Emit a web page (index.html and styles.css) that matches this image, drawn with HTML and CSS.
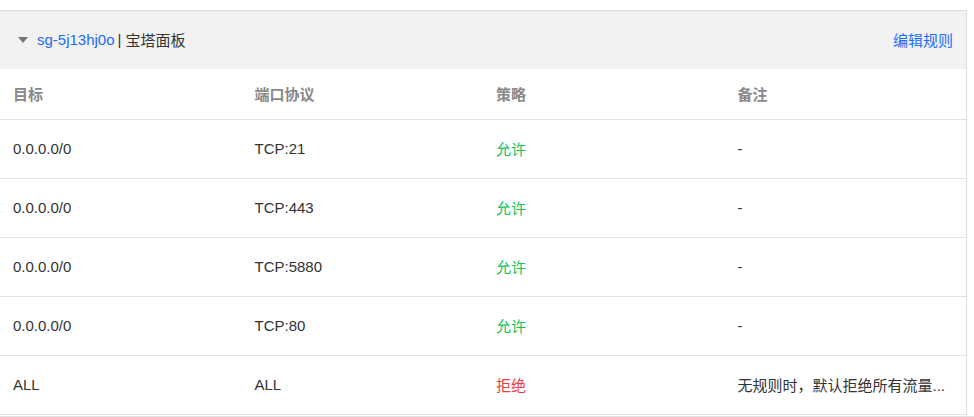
FILE: index.html
```html
<!DOCTYPE html>
<html lang="zh-CN">
<head>
<meta charset="utf-8">
<title>安全组规则</title>
<link rel="stylesheet" href="styles.css">
</head>
<body>
<div class="panel">
  <div class="panel-head">
    <div class="title">
      <span class="caret"></span>
      <span class="sg-id">sg-5j13hj0o</span><span class="sep">|</span><span class="sg-name">宝塔面板</span>
    </div>
    <a class="edit">编辑规则</a>
  </div>
  <div class="row thead">
    <div class="cell">目标</div>
    <div class="cell">端口协议</div>
    <div class="cell">策略</div>
    <div class="cell">备注</div>
  </div>
  <div class="row">
    <div class="cell">0.0.0.0/0</div>
    <div class="cell">TCP:21</div>
    <div class="cell allow">允许</div>
    <div class="cell">-</div>
  </div>
  <div class="row">
    <div class="cell">0.0.0.0/0</div>
    <div class="cell">TCP:443</div>
    <div class="cell allow">允许</div>
    <div class="cell">-</div>
  </div>
  <div class="row">
    <div class="cell">0.0.0.0/0</div>
    <div class="cell">TCP:5880</div>
    <div class="cell allow">允许</div>
    <div class="cell">-</div>
  </div>
  <div class="row">
    <div class="cell">0.0.0.0/0</div>
    <div class="cell">TCP:80</div>
    <div class="cell allow">允许</div>
    <div class="cell">-</div>
  </div>
  <div class="row">
    <div class="cell">ALL</div>
    <div class="cell">ALL</div>
    <div class="cell deny">拒绝</div>
    <div class="cell">无规则时，默认拒绝所有流量...</div>
  </div>
</div>
<div class="next"></div>
</body>
</html>
```
FILE: styles.css
```css
html, body {
  margin: 0;
  padding: 0;
  background: #fff;
}
body {
  font-family: "Liberation Sans", Arial, "Noto Sans CJK SC", sans-serif;
  font-size: 15px;
  color: #333;
}
.panel {
  margin-top: 10px;
  margin-left: -1px;
  width: 966px;
  border: 1px solid #ddd;
  border-bottom: none;
}
.panel-head {
  height: 57px;
  background: #f2f2f2;
  display: flex;
  align-items: center;
  justify-content: space-between;
  padding: 0 13px 0 18px;
  border-bottom: 1px solid #f2f2f2;
}
.title {
  display: flex;
  align-items: center;
}
.caret {
  width: 0;
  height: 0;
  border-left: 5px solid transparent;
  border-right: 5px solid transparent;
  border-top: 6px solid #777;
  margin-right: 9px;
  margin-top: 1px;
}
.sg-id {
  color: #1a6bff;
}
.sep {
  color: #333;
  margin: 0 4px 0 3px;
}
.sg-name {
  color: #333;
}
.edit {
  color: #1a6bff;
  cursor: pointer;
}
.row {
  display: grid;
  grid-template-columns: repeat(4, 1fr);
  height: 58px;
  align-items: center;
  border-bottom: 1px solid #e2e2e2;
}
.row.thead {
  height: 50px;
  color: #888;
  font-weight: bold;
}
.cell {
  padding-left: 13px;
  padding-bottom: 2px;
  white-space: nowrap;
}
.allow {
  color: #10c35a;
}
.deny {
  color: #ef3d47;
}
.next {
  margin-top: 1px;
  border-top: 1px solid #e2e2e2;
  height: 10px;
}
```
